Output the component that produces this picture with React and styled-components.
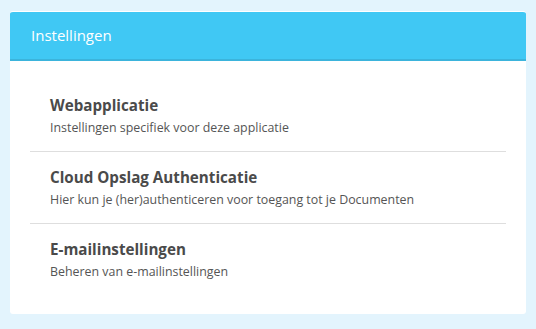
import React from 'react';
import styled, { createGlobalStyle } from 'styled-components';

const GlobalStyle = createGlobalStyle`
	html, body {
		margin: 0;
		padding: 0;
		background: #e3f4fd;
	}
	body {
		font-family: 'Open Sans', 'Noto Sans', sans-serif;
	}
`;

const Page = styled.div`
	width: 536px;
	height: 329px;
	padding: 11px 10px 0 10px;
	box-sizing: border-box;
`;

const Card = styled.div`
	background: #ffffff;
	border-radius: 3px;
	overflow: hidden;
	border-top: 1px solid #ffffff;
	height: 303px;
	box-sizing: border-box;
`;

const CardHeader = styled.div`
	background: #40c8f4;
	border-bottom: 2px solid #3bb4dc;
	height: 49px;
	box-sizing: border-box;
	display: flex;
	align-items: center;
	padding: 0 21px 2px;
	color: #ffffff;
	font-size: 15px;
`;

const CardBody = styled.div`
	padding: 19px 20px 0;
`;

const Item = styled.div`
	padding: 15px 20px 12px;
	border-bottom: ${(p) => (p.last ? 'none' : '1px solid #dedede')};
	height: 72px;
	box-sizing: border-box;
	cursor: pointer;
`;

const ItemTitle = styled.div`
	font-weight: 700;
	font-size: 15.2px;
	line-height: 20px;
	color: #4a4a4a;
`;

const ItemText = styled.div`
	margin-top: 5px;
	font-size: 12.4px;
	line-height: 16px;
	color: #555555;
`;

const items = [
	{ title: 'Webapplicatie', text: 'Instellingen specifiek voor deze applicatie' },
	{ title: 'Cloud Opslag Authenticatie', text: 'Hier kun je (her)authenticeren voor toegang tot je Documenten' },
	{ title: 'E-mailinstellingen', text: 'Beheren van e-mailinstellingen' },
];

export default function App() {
	return (
		<>
			<GlobalStyle />
			<Page>
				<Card>
					<CardHeader>Instellingen</CardHeader>
					<CardBody>
						{items.map((item, i) => (
							<Item key={item.title} last={i === items.length - 1}>
								<ItemTitle>{item.title}</ItemTitle>
								<ItemText>{item.text}</ItemText>
							</Item>
						))}
					</CardBody>
				</Card>
			</Page>
		</>
	);
}
